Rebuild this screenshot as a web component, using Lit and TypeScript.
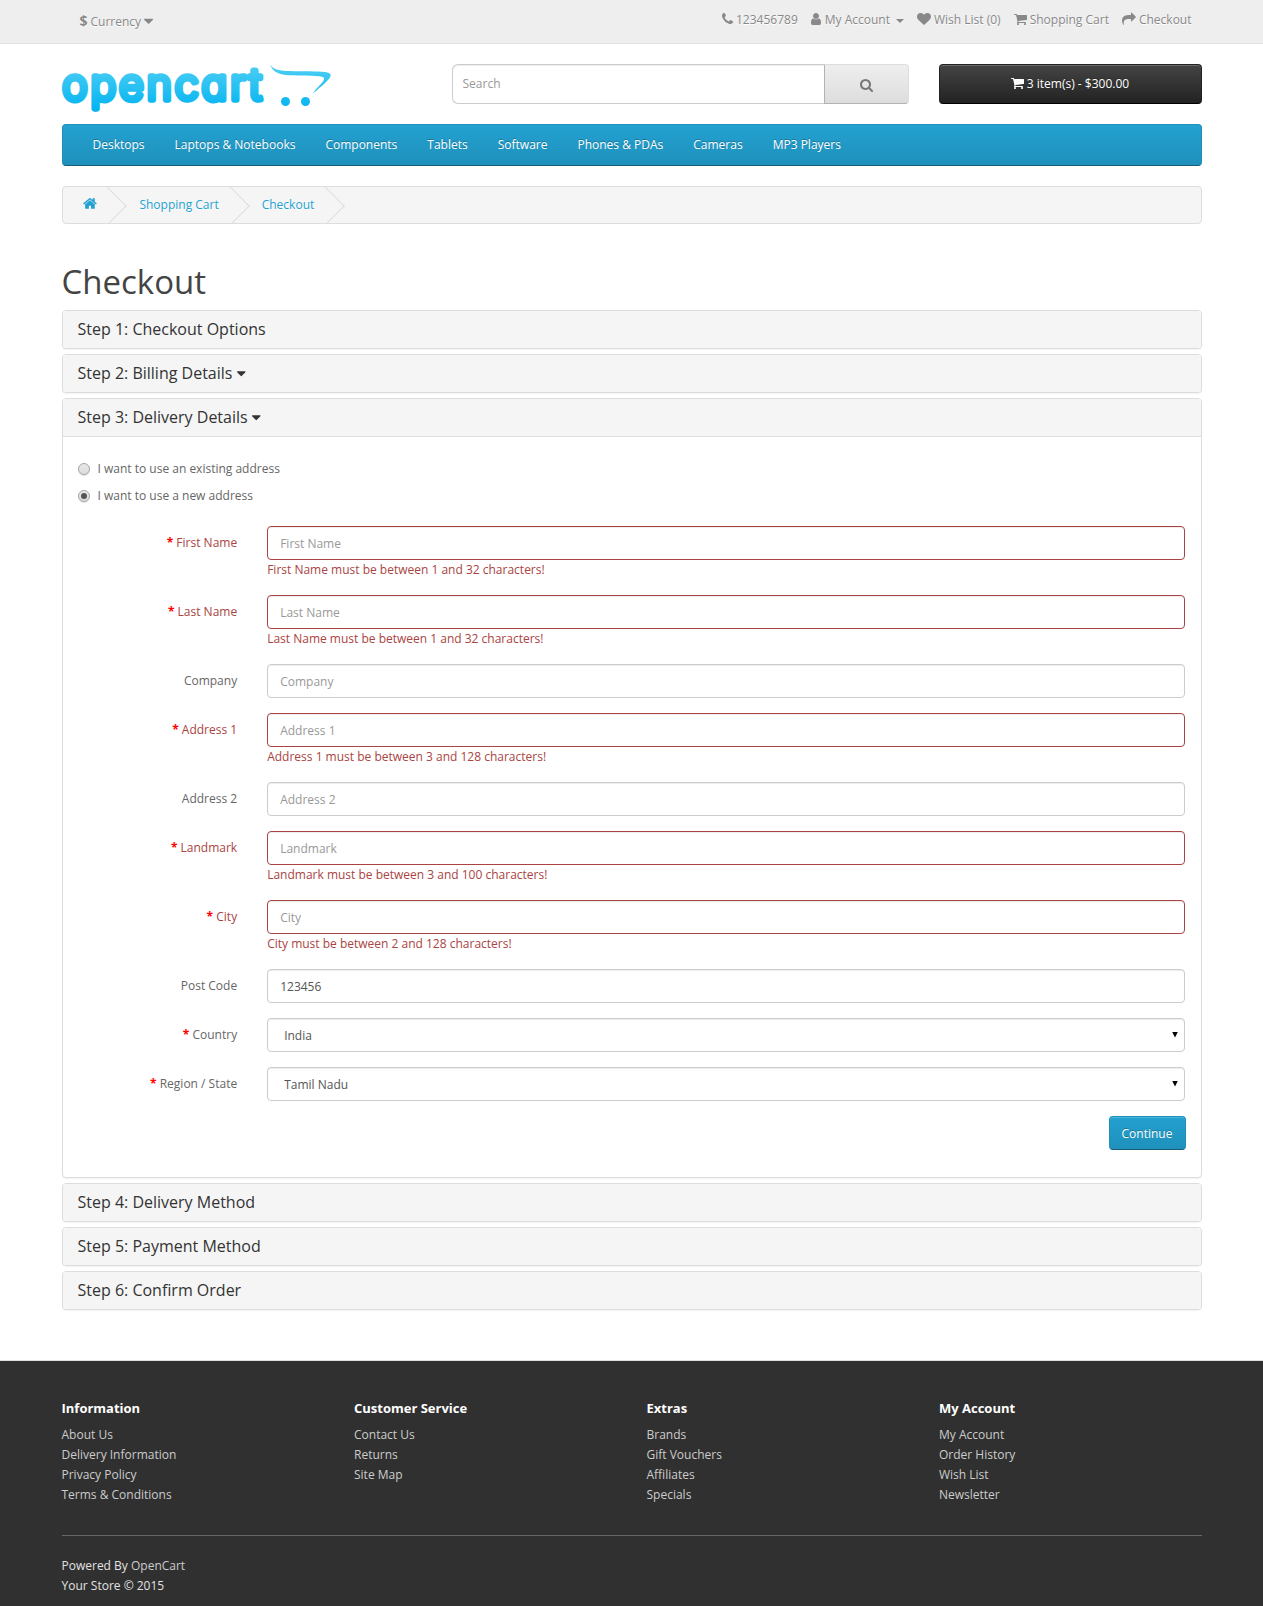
import { LitElement, html, svg, css, nothing } from "lit";
import { customElement } from "lit/decorators.js";
import { classMap } from "lit/directives/class-map.js";

type Glyph = { x: number; w: number; d: string };

const GLYPHS: Record<string, Glyph> = {
  phone: { x: 192, w: 1408, d: "M1600 1240q0 27-10 70.5t-21 68.5q-21 50-122 106-94 51-186 51-27 0-53-3.5t-57.5-12.5-47-14.5-55.5-20.5-49-18q-98-35-175-83-127-79-264-216t-216-264q-48-77-83-175-3-9-18-49t-20.5-55.5-14.5-47-12.5-57.5-3.5-53q0-92 51-186 56-101 106-122 25-11 68.5-21t70.5-10q14 0 21 3 18 6 53 76 11 19 30 54t35 63.5 31 53.5q3 4 17.5 25t21.5 35.5 7 28.5q0 20-28.5 50t-62 55-62 53-28.5 46q0 9 5 22.5t8.5 20.5 14 24 11.5 19q76 137 174 235t235 174q2 1 19 11.5t24 14 20.5 8.5 22.5 5q18 0 46-28.5t53-62 55-62 50-28.5q14 0 28.5 7t35.5 21.5 25 17.5q25 15 53.5 31t63.5 35 54 30q70 35 76 53 3 7 3 21z" },
  user: { x: 256, w: 1280, d: "M1536 1399q0 109-62.5 187t-150.5 78h-854q-88 0-150.5-78t-62.5-187q0-85 8.5-160.5t31.5-152 58.5-131 94-89 134.5-34.5q131 128 313 128t313-128q76 0 134.5 34.5t94 89 58.5 131 31.5 152 8.5 160.5zm-256-887q0 159-112.5 271.5t-271.5 112.5-271.5-112.5-112.5-271.5 112.5-271.5 271.5-112.5 271.5 112.5 112.5 271.5z" },
  heart: { x: 0, w: 1792, d: "M896 1664q-26 0-44-18l-624-602q-10-8-27.5-26t-55.5-65.5-68-97.5-53.5-121-23.5-138q0-220 127-344t351-124q62 0 126.5 21.5t120 58 95.5 68.5 76 68q36-36 76-68t95.5-68.5 120-58 126.5-21.5q224 0 351 124t127 344q0 221-229 450l-623 600q-18 18-44 18z" },
  cart: { x: 64, w: 1664, d: "M704 1536q0 52-38 90t-90 38-90-38-38-90 38-90 90-38 90 38 38 90zm896 0q0 52-38 90t-90 38-90-38-38-90 38-90 90-38 90 38 38 90zm128-1088v512q0 24-16.5 42.5t-40.5 21.5l-1044 122q13 60 13 70 0 16-24 64h920q26 0 45 19t19 45-19 45-45 19h-1024q-26 0-45-19t-19-45q0-11 8-31.5t16-36 21.5-40 15.5-29.5l-177-823h-204q-26 0-45-19t-19-45 19-45 45-19h256q16 0 28.5 6.5t19.5 15.5 13 24.5 8 26 5.5 29.5 4.5 26h1201q26 0 45 19t19 45z" },
  share: { x: 0, w: 1792, d: "M1792 640q0 26-19 45l-512 512q-19 19-45 19t-45-19-19-45v-256h-224q-98 0-175.5 6t-154 21.5-133 42.5-105.5 69.5-80 101-48.5 138.5-17.5 181q0 55 5 123 0 6 2.5 23.5t2.5 26.5q0 15-8.5 25t-23.5 10q-16 0-28-17-7-9-13-22t-13.5-30-10.5-24q-127-285-127-451 0-199 53-333 162-403 875-403h224v-256q0-26 19-45t45-19 45 19l512 512q19 19 19 45z" },
  search: { x: 64, w: 1664, d: "M1216 832q0-185-131.5-316.5t-316.5-131.5-316.5 131.5-131.5 316.5 131.5 316.5 316.5 131.5 316.5-131.5 131.5-316.5zm512 832q0 52-38 90t-90 38q-54 0-90-38l-343-342q-179 124-399 124-143 0-273.5-55.5t-225-150-150-225-55.5-273.5 55.5-273.5 150-225 225-150 273.5-55.5 273.5 55.5 225 150 150 225 55.5 273.5q0 220-124 399l343 343q37 37 37 90z" },
  home: { x: 64, w: 1664, d: "M1472 992v480q0 26-19 45t-45 19h-384v-384h-256v384h-384q-26 0-45-19t-19-45v-480q0-1 .5-3t.5-3l575-474 575 474q1 2 1 6zm223-69l-62 74q-8 9-21 11h-3q-13 0-21-7l-692-577-692 577q-12 8-24 7-13-2-21-11l-62-74q-8-10-7-23.5t11-21.5l719-599q32-26 76-26t76 26l244 204v-195q0-14 9-23t23-9h192q14 0 23 9t9 23v408l219 182q10 8 11 21.5t-7 23.5z" },
  caret: { x: 384, w: 1024, d: "M1408 704q0 26-19 45l-448 448q-19 19-45 19t-45-19l-448-448q-19-19-19-45t19-45 45-19h896q26 0 45 19t19 45z" },
};

function icon(name: string, size = 14) {
  const g = GLYPHS[name];
  return html`<svg class="icon" width=${(g.w / 1792) * size} height=${size} viewBox="${g.x} 0 ${g.w} 1792" aria-hidden="true">${svg`<path d=${g.d} fill="currentColor"></path>`}</svg>`;
}

const NAV = ["Desktops", "Laptops & Notebooks", "Components", "Tablets", "Software", "Phones & PDAs", "Cameras", "MP3 Players"];

type Field = { label: string; required?: boolean; error?: string; value?: string; select?: boolean };

const FIELDS: Field[] = [
  { label: "First Name", required: true, error: "First Name must be between 1 and 32 characters!" },
  { label: "Last Name", required: true, error: "Last Name must be between 1 and 32 characters!" },
  { label: "Company" },
  { label: "Address 1", required: true, error: "Address 1 must be between 3 and 128 characters!" },
  { label: "Address 2" },
  { label: "Landmark", required: true, error: "Landmark must be between 3 and 100 characters!" },
  { label: "City", required: true, error: "City must be between 2 and 128 characters!" },
  { label: "Post Code", value: "123456" },
  { label: "Country", required: true, value: "India", select: true },
  { label: "Region / State", required: true, value: "Tamil Nadu", select: true },
];

const FOOTER: { title: string; links: string[] }[] = [
  { title: "Information", links: ["About Us", "Delivery Information", "Privacy Policy", "Terms & Conditions"] },
  { title: "Customer Service", links: ["Contact Us", "Returns", "Site Map"] },
  { title: "Extras", links: ["Brands", "Gift Vouchers", "Affiliates", "Specials"] },
  { title: "My Account", links: ["My Account", "Order History", "Wish List", "Newsletter"] },
];

const base = css`
  :host { display: block; }
  * { box-sizing: border-box; }
  .icon { display: block; flex: none; overflow: visible; }
`;

@customElement("shop-topbar")
export class ShopTopbar extends LitElement {
  static styles = [base, css`
    .bar { height: 44px; background: #eee; border-bottom: 1px solid #e2e2e2; color: #888; text-shadow: 0 1px 0 #fff; }
    .inner { width: 1140px; margin: 0 auto; display: flex; justify-content: space-between; }
    .currency { display: flex; align-items: center; height: 20px; margin: 12px 0 0 18px; }
    .currency strong { font-size: 14px; width: 11px; line-height: 20px; margin-top: -2px; }
    .currency .icon { margin: -3px 0 0 3px; }
    .links { display: flex; margin: 10px 10px 0 0; gap: 13px; }
    .link { display: flex; align-items: center; gap: 3px; height: 20px; }
    .link .icon { margin-top: -2px; }
    .tri { border: 4px solid transparent; border-top-color: currentColor; border-bottom: 0; margin: 2px 0 0 2px; }
    .account { gap: 4px; }
  `];
  render() {
    return html`<nav class="bar"><div class="inner">
      <div class="currency"><strong>$</strong><span>Currency</span>${icon("caret", 16)}</div>
      <div class="links">
        <div class="link">${icon("phone")}<span>123456789</span></div>
        <div class="link account">${icon("user")}<span>My Account</span><span class="tri"></span></div>
        <div class="link">${icon("heart")}<span>Wish List (0)</span></div>
        <div class="link">${icon("cart")}<span>Shopping Cart</span></div>
        <div class="link">${icon("share")}<span>Checkout</span></div>
      </div>
    </div></nav>`;
  }
}

@customElement("shop-header")
export class ShopHeader extends LitElement {
  static styles = [base, css`
    .head { display: flex; height: 80px; padding-top: 20px; }
    .logo { width: 270px; height: 60px; margin-right: 120px; overflow: visible; }
    .wordmark { font-family: Inter, sans-serif; font-weight: 300; font-size: 43px; line-height: 50px; font-feature-settings: "cv11" 1; }
    .search { display: flex; width: 457px; height: 40px; margin-right: 30px; }
    .query { width: 372px; height: 40px; border: 1px solid #ccc; border-right: 0; border-radius: 6px 0 0 6px; padding: 0 10px 1px; font: inherit; background: #fff; box-shadow: inset 0 1px 1px rgba(0,0,0,.075); outline: 0; }
    .query::placeholder { color: #999; opacity: 1; }
    .go { flex: 1; display: flex; align-items: center; justify-content: center; padding: 2px 0 0 0; color: #777; background: linear-gradient(#eee, #ddd); border: 1px solid; border-color: #ddd #ddd #b3b3b3 #b3b3b3; border-radius: 0 4px 4px 0; }
    .cart { width: 263px; height: 40px; display: flex; align-items: center; justify-content: center; gap: 3px; color: #fff; background: linear-gradient(#444, #222); border: 1px solid; border-color: #222 #222 #000; border-radius: 4px; box-shadow: inset 0 1px 0 rgba(255,255,255,.2); text-shadow: 0 -1px 0 rgba(0,0,0,.25); }
    .cart .icon { margin-top: -2px; }
    .menu { display: flex; height: 42px; padding: 0 0 1px 15px; border: 1px solid; border-color: #1f90bb #1f90bb #145e7a; border-radius: 4px; background: linear-gradient(#23a1d1, #1f90bb); }
    .item { padding: 10px 15px; line-height: 20px; color: #fff; text-shadow: 0 -1px 0 rgba(0,0,0,.25); white-space: nowrap; }
  `];
  render() {
    return html`
      <header class="head">
        <svg class="logo" viewBox="0 0 270 60" role="img" aria-label="opencart">
          <defs>
            <linearGradient id="sky" gradientUnits="userSpaceOnUse" x1="0" y1="2" x2="0" y2="48">
              <stop offset="0" stop-color="#4bcdf4"></stop><stop offset="1" stop-color="#00b3f0"></stop>
            </linearGradient>
          </defs>
          <text class="wordmark" transform="scale(.99 1)" x="0.300" y="36.300" textLength="201.500" lengthAdjust="spacing" fill="url(#sky)" stroke="url(#sky)" stroke-width="5.600" stroke-linejoin="round">opencart</text>
          <path fill="url(#sky)" d="M208 .5C212 6.500 219 7 232 7.200C247 7.400 259 7 265.500 8.500C269.500 9.500 269.500 12 266.500 15.500C263 19.500 255.500 25.500 251 29.500C253.500 25 259.500 20 261.500 16.500C263 13.500 261.500 12.600 257 12.200C248 11.300 234 12 224 11C214.500 10 210.500 6.500 208 .5Z"></path>
          <circle cx="223.500" cy="37.500" r="4.500" fill="url(#sky)"></circle>
          <circle cx="243.500" cy="37.500" r="4.500" fill="url(#sky)"></circle>
        </svg>
        <div class="search">
          <input class="query" type="text" placeholder="Search" />
          <div class="go">${icon("search")}</div>
        </div>
        <div class="cart">${icon("cart")}<span>3 item(s) - $300.00</span></div>
      </header>
      <nav class="menu">${NAV.map((n) => html`<div class="item">${n}</div>`)}</nav>
    `;
  }
}

@customElement("shop-breadcrumb")
export class ShopBreadcrumb extends LitElement {
  static styles = [base, css`
    .trail { display: flex; height: 38px; margin-top: 20px; border: 1px solid #ddd; border-radius: 4px; background: #f5f5f5; overflow: hidden; color: #23a1d1; }
    .crumb { display: flex; align-items: center; padding: 0 26px 0 20px; position: relative; text-shadow: 0 1px 0 #fff; }
    .crumb + .crumb { padding-left: 17px; }
    .crumb::after { content: ""; position: absolute; top: 4.500px; right: 1px; width: 27px; height: 27px; border: solid #ddd; border-width: 1px 1px 0 0; transform: rotate(45deg); }
    .house { padding-bottom: 3px; }
  `];
  render() {
    return html`<div class="trail">
      <div class="crumb"><span class="house">${icon("home", 15)}</span></div>
      <div class="crumb">Shopping Cart</div>
      <div class="crumb">Checkout</div>
    </div>`;
  }
}

@customElement("address-form")
export class AddressForm extends LitElement {
  static styles = [base, css`
    .body { padding: 18px 15px 27px; }
    .choice { display: flex; align-items: center; height: 27px; gap: 8px; }
    .radio { width: 12px; height: 12px; border-radius: 50%; border: 1px solid #a5a5a5; background: linear-gradient(#e8e8e8, #dcdcdc); box-shadow: 0 1px 1px rgba(0,0,0,.12); display: flex; align-items: center; justify-content: center; }
    .radio.on::after { content: ""; width: 6px; height: 6px; border-radius: 50%; background: #555; }
    .fields { margin: 17px 1px 0 0; display: grid; row-gap: 15px; }
    .row { display: grid; grid-template-columns: 159.670px 1fr; column-gap: 30px; }
    .label { text-align: right; padding-top: 7px; line-height: 20px; }
    .star { color: #f00; font-weight: 700; }
    .bad { color: #a94442; }
    .control { display: block; width: 100%; height: 34px; padding: 0 12px; border: 1px solid #ccc; border-radius: 4px; background: #fff; color: #555; font: inherit; box-shadow: inset 0 1px 1px rgba(0,0,0,.075); outline: 0; appearance: none; }
    .control::placeholder { color: #999; opacity: 1; }
    .bad .control { border-color: #a94442; }
    .pick { display: grid; align-items: center; }
    .pick > * { grid-area: 1 / 1; }
    .pick .control { padding: 2px 12px 0 16px; }
    .arrow { justify-self: end; margin: 0 6.500px 1px 0; width: 6px; height: 6px; background: #000; clip-path: polygon(0 0, 100% 0, 50% 100%); }
    .error { line-height: 20px; }
    .actions { display: flex; justify-content: flex-end; margin-top: 15px; }
    .go { height: 34px; width: 77px; font: inherit; color: #fff; padding: 2px 0 0; text-shadow: 0 -1px 0 rgba(0,0,0,.25); border: 1px solid; border-color: #1f90bb #1f90bb #145e7a; border-radius: 4px; background: linear-gradient(#23a1d1, #1f90bb); box-shadow: inset 0 1px 0 rgba(255,255,255,.2); }
  `];
  private control(f: Field) {
    if (f.select) {
      return html`<div class="pick"><select class="control"><option>${f.value}</option></select><span class="arrow"></span></div>`;
    }
    return html`<input class="control" type="text" placeholder=${f.label} .value=${f.value ?? ""} />`;
  }
  render() {
    return html`<div class="body">
      <div class="choice"><span class="radio"></span><span>I want to use an existing address</span></div>
      <div class="choice"><span class="radio on"></span><span>I want to use a new address</span></div>
      <div class="fields">
        ${FIELDS.map((f) => html`<div class=${classMap({ row: true, bad: !!f.error })}>
          <label class="label">${f.required ? html`<span class="star">* </span>` : nothing}${f.label}</label>
          <div>${this.control(f)}${f.error ? html`<div class="error">${f.error}</div>` : nothing}</div>
        </div>`)}
      </div>
      <div class="actions"><button class="go">Continue</button></div>
    </div>`;
  }
}

@customElement("checkout-step")
export class CheckoutStep extends LitElement {
  static properties = { heading: { type: String }, caret: { type: Boolean }, open: { type: Boolean } };
  declare heading: string;
  declare caret: boolean;
  declare open: boolean;
  static styles = [base, css`
    .panel { border: 1px solid #ddd; border-radius: 4px; background: #fff; box-shadow: 0 1px 1px rgba(0,0,0,.05); }
    .title { display: flex; align-items: center; height: 37px; padding: 0 15px 1px; font-size: 16px; color: #333; background: #f5f5f5; border-radius: 3px; gap: 4.500px; }
    .open { height: 38px; border-bottom: 1px solid #ddd; border-radius: 3px 3px 0 0; }
  `];
  render() {
    return html`<section class="panel">
      <div class=${classMap({ title: true, open: this.open })}><span>${this.heading}</span>${this.caret ? icon("caret", 15) : nothing}</div>
      <slot></slot>
    </section>`;
  }
}

@customElement("shop-footer")
export class ShopFooter extends LitElement {
  static styles = [base, css`
    .foot { height: 246px; border-top: 1px solid #ddd; background: #303030; color: #e2e2e2; padding-top: 37px; }
    .inner { width: 1140px; margin: 0 auto; }
    .cols { display: grid; grid-template-columns: repeat(4, 292.500px); height: 137px; overflow: visible; }
    .head { font-weight: 700; font-size: 13px; line-height: 20px; color: #fff; margin-bottom: 7px; }
    .link { line-height: 20px; color: #ccc; }
    .note { border-top: 1px solid #666; padding-top: 20px; line-height: 20px; }
    .brand { color: #ccc; }
  `];
  render() {
    return html`<footer class="foot"><div class="inner">
      <div class="cols">${FOOTER.map((c) => html`<div><div class="head">${c.title}</div>${c.links.map((l) => html`<div class="link">${l}</div>`)}</div>`)}</div>
      <div class="note">Powered By <span class="brand">OpenCart</span><br />Your Store © 2015</div>
    </div></footer>`;
  }
}

@customElement("app-root")
export class AppRoot extends LitElement {
  static styles = [base, css`
    :host { width: 100%; background: #fff; color: #666; font: 400 12px/20px "Open Sans", sans-serif; }
    .page { width: 1140px; margin: 0 auto; height: 1316px; }
    .h1 { margin: 38px 0 8px; font-weight: 400; font-size: 33px; line-height: 40px; color: #444; }
    .steps { display: grid; row-gap: 5px; }
  `];
  render() {
    return html`
      <shop-topbar></shop-topbar>
      <main class="page">
        <shop-header></shop-header>
        <shop-breadcrumb></shop-breadcrumb>
        <h1 class="h1">Checkout</h1>
        <div class="steps">
          <checkout-step heading="Step 1: Checkout Options"></checkout-step>
          <checkout-step heading="Step 2: Billing Details" caret></checkout-step>
          <checkout-step heading="Step 3: Delivery Details" caret open><address-form></address-form></checkout-step>
          <checkout-step heading="Step 4: Delivery Method"></checkout-step>
          <checkout-step heading="Step 5: Payment Method"></checkout-step>
          <checkout-step heading="Step 6: Confirm Order"></checkout-step>
        </div>
      </main>
      <shop-footer></shop-footer>
    `;
  }
}
